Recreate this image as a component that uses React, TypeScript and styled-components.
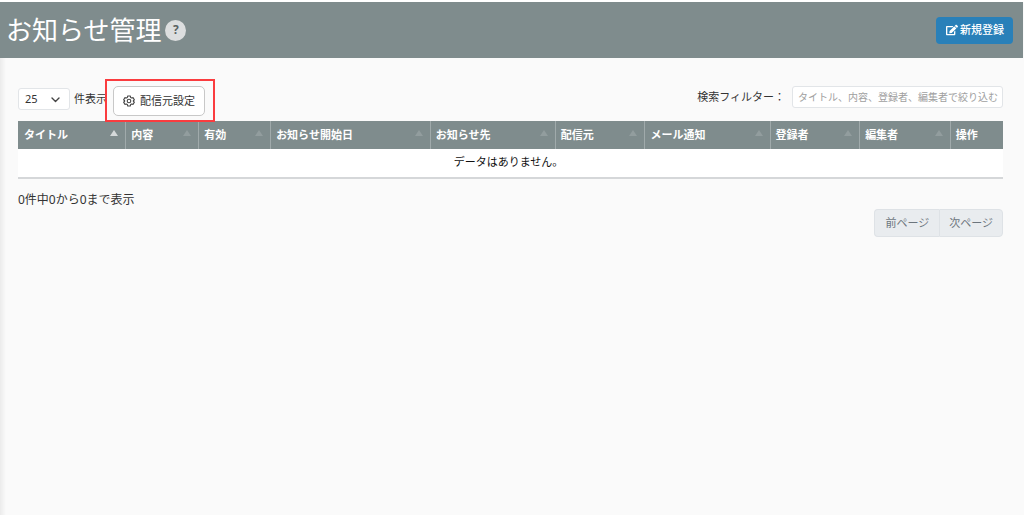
import React from "react";
import styled, { createGlobalStyle } from "styled-components";
import { FaEdit } from "react-icons/fa";

const GlobalStyle = createGlobalStyle`
  * { box-sizing: border-box; }
  body {
    margin: 0;
    background: #fafafa;
    color: #333;
    font: 11px/16px "Noto Sans", "Noto Sans CJK JP", sans-serif;
  }
  button, input, select { font: inherit; color: inherit; }
`;

const Page = styled.div`
  min-height: 100vh;
  border-top: 2px solid #fff;
  background: linear-gradient(to right, #ebebeb, #fafafa 6px);
`;

const Header = styled.header`
  display: flex;
  align-items: center;
  gap: 4px;
  height: 56px;
  padding: 0 10px 0 6px;
  margin-right: 1px;
  background: #7f8c8d;
`;

const Title = styled.h1`
  margin: 0;
  color: #fff;
  font-size: 26px;
  line-height: 36px;
  font-weight: 400;
`;

const HelpButton = styled.button`
  width: 21px;
  height: 21px;
  padding: 0;
  border: 0;
  border-radius: 50%;
  background: #dcdedf;
  color: #596263;
  font-size: 12px;
  font-weight: 700;
`;

const CreateButton = styled.button`
  display: flex;
  align-items: center;
  justify-content: center;
  gap: 2px;
  height: 27px;
  padding: 0 9px 0 10px;
  margin-left: auto;
  border: 0;
  border-radius: 4px;
  background: #2980b9;
  color: #fff;
  font-weight: 500;
  svg { width: 12px; height: 12px; }
`;

const Main = styled.main`
  padding: 28px 21px 0 18px;
`;

const Toolbar = styled.div`
  display: flex;
  justify-content: space-between;
  align-items: flex-start;
  height: 35px;
`;

const LengthGroup = styled.div`
  display: flex;
  align-items: flex-start;
`;

const LengthLabel = styled.label`
  display: flex;
  align-items: center;
  gap: 4px;
  height: 22px;
  margin-top: 2px;
`;

const SelectBox = styled.span`
  position: relative;
  display: flex;
  svg {
    position: absolute;
    right: 10px;
    top: 7px;
    pointer-events: none;
  }
`;

const LengthSelect = styled.select`
  appearance: none;
  width: 52px;
  height: 22px;
  padding: 0 6px;
  border: 1px solid #e2e5e8;
  border-radius: 3px;
  background: #fff;
`;

const Highlight = styled.div`
  position: relative;
  margin-left: 6px;
  &::after {
    content: "";
    position: absolute;
    inset: -7px -10px -6px -8px;
    border: 2px solid #fa3c3f;
    pointer-events: none;
  }
`;

const SourceButton = styled.button`
  display: flex;
  align-items: center;
  gap: 5px;
  height: 30px;
  padding: 0 9px;
  border: 1px solid #c8c8c8;
  border-radius: 5px;
  background: #fff;
`;

const FilterLabel = styled.label`
  display: flex;
  align-items: center;
  gap: 7px;
`;

const FilterInput = styled.input`
  width: 211px;
  height: 22px;
  padding: 0 4px 0 5px;
  border: 1px solid #e2e5e8;
  border-radius: 3px;
  background: #fff;
  font-size: 10px;
  &::placeholder { color: #a0a0a0; opacity: 1; }
`;

const Table = styled.table`
  width: 100%;
  table-layout: fixed;
  border-collapse: separate;
  border-spacing: 0;
  border-bottom: 2px solid #d5d7d9;
  background: #fff;
`;

const HeadCell = styled.th<{ $share: number }>`
  width: ${(p) => p.$share}%;
  height: 28px;
  padding: 0 5px;
  border-left: 1px solid #a0aaab;
  background: #7f8c8d;
  color: #fff;
  text-align: left;
  font-weight: 700;
  white-space: nowrap;
  &:first-child { border-left-color: #7f8c8d; }
`;

const HeadContent = styled.div`
  display: flex;
  align-items: center;
  justify-content: space-between;
`;

const SortMark = styled.svg<{ $active: boolean }>`
  width: 8px;
  height: 6px;
  margin: 0 2px 5px 0;
  fill: ${(p) => (p.$active ? "#d5d9da" : "#929d9e")};
`;

const EmptyCell = styled.td`
  height: 28px;
  padding: 0 4px 2px 0;
  text-align: center;
  color: #111;
`;

const Info = styled.p`
  margin: 13px 0 1px;
  font-size: 12px;
`;

const Pager = styled.nav`
  display: flex;
  justify-content: flex-end;
`;

const PageButton = styled.button`
  height: 28px;
  padding: 0 9px;
  border: 1px solid #dee2e6;
  background: #e9ecef;
  &:disabled { color: #6c757d; }
  &:first-child { border-radius: 4px 0 0 4px; border-right: 0; padding: 0 10px; }
  &:last-child { border-radius: 0 4px 4px 0; }
`;

const columns = [
  { label: "タイトル", share: 10.9 },
  { label: "内容", share: 7.4 },
  { label: "有効", share: 7.3 },
  { label: "お知らせ開始日", share: 16.2 },
  { label: "お知らせ先", share: 12.7 },
  { label: "配信元", share: 9.1 },
  { label: "メール通知", share: 12.7 },
  { label: "登録者", share: 9.1 },
  { label: "編集者", share: 9.2 },
  { label: "操作", share: 5.4, fixed: true },
];

const Gear = () => (
  <svg width="12" height="12" viewBox="0 0 24 24" fill="none" stroke="#444" strokeWidth="2.200" strokeLinejoin="round" aria-hidden="true">
    <path d="M9.500 2h5l.8 2.800 2.200 1.200 2.800-.700 2.400 4.200-2 2v1l2 2-2.400 4.200-2.800-.700-2.200 1.200-.8 2.800h-5l-.8-2.800-2.200-1.200-2.800.700-2.400-4.200 2-2v-1l-2-2 2.400-4.200 2.800.700 2.200-1.200z" />
    <circle cx="12" cy="12" r="3.600" />
  </svg>
);

export default function App() {
  return (
    <Page>
      <GlobalStyle />
      <Header>
        <Title>お知らせ管理</Title>
        <HelpButton type="button" aria-label="ヘルプ">?</HelpButton>
        <CreateButton type="button">
          <FaEdit aria-hidden="true" />
          新規登録
        </CreateButton>
      </Header>
      <Main>
        <Toolbar>
          <LengthGroup>
            <LengthLabel>
              <SelectBox>
                <LengthSelect defaultValue="25">
                  <option>10</option>
                  <option>25</option>
                  <option>50</option>
                </LengthSelect>
                <svg width="9" height="9" viewBox="0 0 9 9" fill="none" stroke="#444" strokeWidth="1.400" strokeLinecap="round" strokeLinejoin="round" aria-hidden="true">
                  <path d="M1 3l3.500 3.500L8 3" />
                </svg>
              </SelectBox>
              件表示
            </LengthLabel>
            <Highlight>
              <SourceButton type="button">
                <Gear />
                配信元設定
              </SourceButton>
            </Highlight>
          </LengthGroup>
          <FilterLabel>
            検索フィルター：
            <FilterInput type="text" placeholder="タイトル、内容、登録者、編集者で絞り込む" />
          </FilterLabel>
        </Toolbar>
        <Table>
          <thead>
            <tr>
              {columns.map((c, i) => (
                <HeadCell key={c.label} $share={c.share} scope="col">
                  <HeadContent>
                    {c.label}
                    {!c.fixed && (
                      <SortMark $active={i === 0} viewBox="0 0 8 6" aria-hidden="true">
                        <path d="M4 0l4 6H0z" />
                      </SortMark>
                    )}
                  </HeadContent>
                </HeadCell>
              ))}
            </tr>
          </thead>
          <tbody>
            <tr>
              <EmptyCell colSpan={columns.length}>データはありません。</EmptyCell>
            </tr>
          </tbody>
        </Table>
        <Info>0件中0から0まで表示</Info>
        <Pager aria-label="ページ送り">
          <PageButton type="button" disabled>前ページ</PageButton>
          <PageButton type="button" disabled>次ページ</PageButton>
        </Pager>
      </Main>
    </Page>
  );
}
